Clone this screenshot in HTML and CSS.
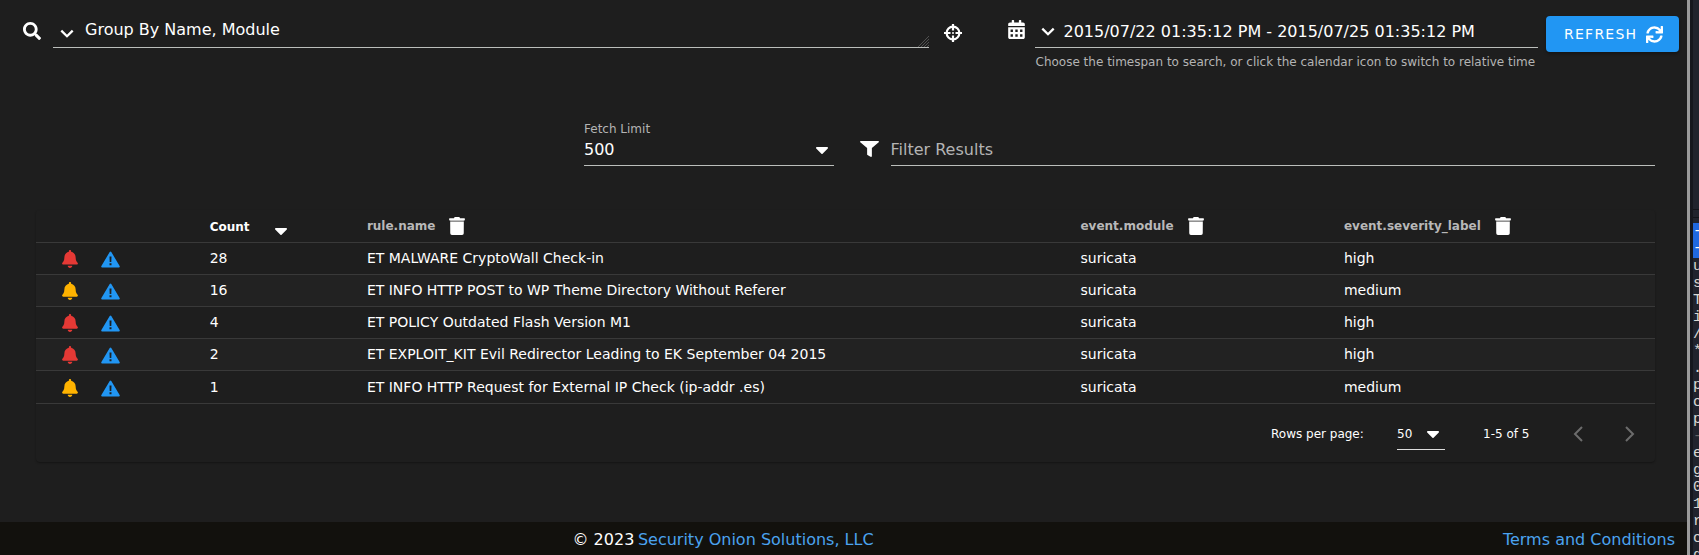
FILE: index.html
```html
<!DOCTYPE html>
<html lang="en">
<head>
<meta charset="utf-8">
<title>Alerts</title>
<link rel="stylesheet" href="styles.css">
</head>
<body>
<svg class="defs" aria-hidden="true">
  <symbol id="search" viewBox="0 0 512 512"><path d="M505 442.7L405.3 343c-4.5-4.5-10.6-7-17-7H372c27.6-35.3 44-79.7 44-128C416 93.1 322.9 0 208 0S0 93.1 0 208s93.1 208 208 208c48.3 0 92.7-16.4 128-44v16.3c0 6.400 2.500 12.500 7 17l99.700 99.700c9.400 9.400 24.600 9.400 33.900 0l28.300-28.300c9.400-9.400 9.400-24.600.1-34zM208 336c-70.700 0-128-57.200-128-128 0-70.700 57.200-128 128-128 70.700 0 128 57.200 128 128 0 70.700-57.200 128-128 128z"/></symbol>
  <symbol id="chevron" viewBox="0 0 14 9"><path d="M1.300 1.600L7 7.200l5.700-5.600" fill="none" stroke="currentColor" stroke-width="2.300"/></symbol>
  <symbol id="crosshair" viewBox="0 0 18 18"><g fill="none" stroke="currentColor" stroke-width="2.200"><circle cx="9" cy="9" r="6.400"/><path d="M9 0v6.500M9 11.500V18M0 9h6.500M11.500 9H18"/></g><circle cx="9" cy="9" r="1"/></symbol>
  <symbol id="calendar" viewBox="0 0 448 512"><path fill-rule="evenodd" d="M0 464c0 26.500 21.500 48 48 48h352c26.500 0 48-21.500 48-48V192H0zM64 256h64v64H64zM192 256h64v64h-64zM320 256h64v64h-64zM64 384h64v64H64zM192 384h64v64h-64zM320 384h64v64h-64zM400 64h-48V16c0-8.800-7.200-16-16-16h-32c-8.800 0-16 7.200-16 16v48H160V16c0-8.800-7.200-16-16-16h-32c-8.800 0-16 7.200-16 16v48H48C21.500 64 0 85.500 0 112v48h448v-48c0-26.500-21.500-48-48-48z"/></symbol>
  <symbol id="sync" viewBox="0 0 512 512"><path d="M440.650 12.570l4 82.770A247.160 247.160 0 0 0 255.830 8C134.730 8 33.910 94.920 12.290 209.820A12 12 0 0 0 24.090 224h49.050a12 12 0 0 0 11.670-9.260 175.910 175.910 0 0 1 317-56.940l-101.460-4.860a12 12 0 0 0-12.570 12v47.410a12 12 0 0 0 12 12H500a12 12 0 0 0 12-12V12a12 12 0 0 0-12-12h-47.370a12 12 0 0 0-11.980 12.570zM255.830 432a175.610 175.610 0 0 1-146-77.800l101.800 4.870a12 12 0 0 0 12.570-12v-47.400a12 12 0 0 0-12-12H12a12 12 0 0 0-12 12V500a12 12 0 0 0 12 12h47.350a12 12 0 0 0 12-12.600l-4.150-82.570A247.170 247.170 0 0 0 255.830 504c121.110 0 221.930-86.920 243.550-201.820a12 12 0 0 0-11.800-14.180h-49.050a12 12 0 0 0-11.670 9.260A175.860 175.860 0 0 1 255.830 432z"/></symbol>
  <symbol id="caret" viewBox="12 190 296 172"><path d="M31.300 192h257.300c17.800 0 26.700 21.500 14.100 34.100L174.100 354.800c-7.800 7.800-20.500 7.800-28.300 0L17.200 226.100C4.600 213.500 13.500 192 31.300 192z"/></symbol>
  <symbol id="filter" viewBox="0 0 512 512" preserveAspectRatio="none"><path d="M487.976 0H24.028C2.710 0-8.047 25.866 7.058 40.971L192 225.941V432c0 7.831 3.821 15.170 10.237 19.662l80 55.980C298.020 518.690 320 507.493 320 487.980V225.941l184.947-184.970C520.021 25.896 509.338 0 487.976 0z"/></symbol>
  <symbol id="trash" viewBox="0 0 448 512"><path opacity=".5" d="M30 90h388v44H30z"/><path d="M30 134l2 330a48 48 0 0 0 48 48h288a48 48 0 0 0 48-48l2-330zM432 32H312l-9.400-18.700A24 24 0 0 0 281.100 0H166.800a23.720 23.720 0 0 0-21.400 13.300L136 32H16A16 16 0 0 0 0 48v32a16 16 0 0 0 16 16h416a16 16 0 0 0 16-16V48a16 16 0 0 0-16-16z"/></symbol>
  <symbol id="bell" viewBox="0 0 448 512"><path d="M224 512c35.320 0 63.970-28.650 63.970-64H160.030c0 35.350 28.650 64 63.970 64zm215.390-149.710c-19.320-20.760-55.470-51.990-55.470-154.290 0-77.700-54.480-139.900-127.940-155.160V32c0-17.670-14.320-32-31.980-32s-31.980 14.330-31.980 32v20.840C118.560 68.100 64.080 130.300 64.080 208c0 102.300-36.150 133.530-55.470 154.290-6 6.450-8.660 14.160-8.610 21.710.11 16.400 12.980 32 32.100 32h383.800c19.120 0 32-15.600 32.100-32 .05-7.550-2.610-15.270-8.610-21.710z"/></symbol>
  <symbol id="warn" viewBox="0 0 19 17"><path fill-rule="evenodd" d="M8.700 1q.8-1.200 1.600 0l8.300 14q.7 1.500-.8 1.500H1.200q-1.500 0-.8-1.500zM8.500 5.500l.2 5.500h1.600l.2-5.500zM8.500 12.300v2h2v-2z"/></symbol>
  <symbol id="grip" viewBox="0 0 11 11"><path d="M0 11L11 0M3 11l8-8M6 11l5-5M9 11l2-2" stroke="#666" stroke-width=".7"/></symbol>
  <symbol id="prev" viewBox="0 0 10 16"><path d="M9 1L2 8l7 7" fill="none" stroke="currentColor" stroke-width="2"/></symbol>
  <symbol id="next" viewBox="0 0 10 16"><path d="M1 1l7 7-7 7" fill="none" stroke="currentColor" stroke-width="2"/></symbol>
</svg>
<div class="screen">
  <div class="app">
    <main>
      <div class="toolbar">
        <svg class="i-search"><use href="#search"/></svg>
        <div class="query"><svg class="chev"><use href="#chevron"/></svg><span class="query-text">Group By Name, Module</span><svg class="grip"><use href="#grip"/></svg></div>
        <svg class="i-cross"><use href="#crosshair"/></svg>
        <svg class="i-cal"><use href="#calendar"/></svg>
        <div class="range">
          <div class="range-input"><svg class="chev"><use href="#chevron"/></svg><span>2015/07/22 01:35:12 PM - 2015/07/25 01:35:12 PM</span></div>
          <div class="hint">Choose the timespan to search, or click the calendar icon to switch to relative time</div>
        </div>
        <button class="refresh"><span>REFRESH</span><svg><use href="#sync"/></svg></button>
      </div>
      <div class="filters">
        <div class="limit">
          <label>Fetch Limit</label>
          <div class="select"><span>500</span><svg class="caret"><use href="#caret"/></svg></div>
        </div>
        <svg class="i-filter"><use href="#filter"/></svg>
        <div class="filter-input">Filter Results</div>
      </div>
      <section class="card">
        <div class="row head">
          <span></span>
          <span class="sorted">Count<svg class="caret"><use href="#caret"/></svg></span>
          <span>rule.name<svg class="i-trash"><use href="#trash"/></svg></span>
          <span>event.module<svg class="i-trash"><use href="#trash"/></svg></span>
          <span>event.severity_label<svg class="i-trash"><use href="#trash"/></svg></span>
        </div>
        <div class="row"><span class="acts"><svg class="bell high"><use href="#bell"/></svg><svg class="warn"><use href="#warn"/></svg></span><span>28</span><span>ET MALWARE CryptoWall Check-in</span><span>suricata</span><span>high</span></div>
        <div class="row alt"><span class="acts"><svg class="bell medium"><use href="#bell"/></svg><svg class="warn"><use href="#warn"/></svg></span><span>16</span><span>ET INFO HTTP POST to WP Theme Directory Without Referer</span><span>suricata</span><span>medium</span></div>
        <div class="row"><span class="acts"><svg class="bell high"><use href="#bell"/></svg><svg class="warn"><use href="#warn"/></svg></span><span>4</span><span>ET POLICY Outdated Flash Version M1</span><span>suricata</span><span>high</span></div>
        <div class="row alt"><span class="acts"><svg class="bell high"><use href="#bell"/></svg><svg class="warn"><use href="#warn"/></svg></span><span>2</span><span>ET EXPLOIT_KIT Evil Redirector Leading to EK September 04 2015</span><span>suricata</span><span>high</span></div>
        <div class="row last"><span class="acts"><svg class="bell medium"><use href="#bell"/></svg><svg class="warn"><use href="#warn"/></svg></span><span>1</span><span>ET INFO HTTP Request for External IP Check (ip-addr .es)</span><span>suricata</span><span>medium</span></div>
        <div class="pager">
          <span class="rpp">Rows per page:</span>
          <span class="size">50<svg class="caret"><use href="#caret"/></svg></span>
          <span class="count">1-5 of 5</span>
          <svg class="arrow"><use href="#prev"/></svg>
          <svg class="arrow"><use href="#next"/></svg>
        </div>
      </section>
    </main>
    <footer><span>© 2023 <a class="company">Security Onion Solutions, LLC</a></span><a>Terms and Conditions</a></footer>
  </div>
  <div class="scrollbar"></div>
  <aside class="terminal">
    <div class="term-top"></div>
    <pre class="selected">-
-</pre>
    <pre>u
s
T
i
/
*
.
p
c
p
<i>-</i>
e
g
0
1
r
c
g</pre>
  </aside>
</div>
</body>
</html>
```
FILE: styles.css
```css
* { box-sizing: border-box; }
body { margin: 0; background: #1e1e1e; color: #fff; font: 16px/20px "DejaVu Sans", sans-serif; overflow: hidden; }
svg { display: block; flex: none; fill: currentColor; }
.defs { position: absolute; width: 0; height: 0; }
.screen { display: flex; width: 1699px; height: 555px; overflow: hidden; }
.app { width: 1687px; display: flex; flex-direction: column; }
main { flex: 1; }

.toolbar { display: flex; align-items: flex-start; height: 126px; padding-left: 23px; white-space: nowrap; }
.i-search { width: 18px; height: 18px; margin: 22px 12px 0 0; }
.query { display: flex; width: 876px; height: 48px; border-bottom: 1px solid #bbbebb; padding: 20px 0 0 7px; }
.query .chev { margin-top: 9px; }
.query-text { flex: 1; margin-left: 11px; }
.chev { width: 14px; height: 9px; }
.grip { width: 11px; height: 11px; margin-top: 16px; }
.i-cross { width: 18px; height: 18px; margin: 24px 0 0 15px; }
.i-cal { width: 17px; height: 19px; margin: 20px 10px 0 46px; }
.range { width: 503px; }
.range-input { display: flex; height: 48px; border-bottom: 1px solid #bbbebb; padding: 22px 0 0 6px; }
.range-input .chev { margin: 5px 8.5px 0 0; }
.hint { font-size: 12px; line-height: 14px; color: #b4b4b4; margin: 7px 0 0 .5px; }
.refresh { display: flex; align-items: center; width: 133px; height: 36px; margin: 16px 0 0 8px; padding: 0 0 0 18px; border: 0; border-radius: 4px; background: #2196f3; color: #fff; font: 14px/16px "DejaVu Sans", sans-serif; letter-spacing: 1.25px; box-shadow: 0 2px 3px rgba(0,0,0,.3); }
.refresh span { width: 82px; text-align: left; }
.refresh svg { width: 17px; height: 17px; margin-top: 1px; }

.filters { display: flex; padding-left: 584px; height: 84px; }
.limit { width: 250px; height: 40px; border-bottom: 1px solid #bbbebb; }
.limit label { display: block; font-size: 12px; line-height: 14px; color: #b4b4b4; margin-top: -4px; }
.select { display: flex; justify-content: space-between; align-items: center; padding: 4px 6px 0 0; }
.caret { width: 12px; height: 7px; }
.i-filter { width: 19px; height: 16px; margin: 15px 11.5px 0 26px; }
.filter-input { width: 764px; height: 40px; border-bottom: 1px solid #bbbebb; padding-top: 14px; color: #b4b4b4; }

.card { width: 1619px; height: 252px; margin-left: 36px; border-radius: 4px; box-shadow: 0 1px 2px rgba(0,0,0,.35); font-size: 14px; }
.row { display: grid; grid-template-columns: 173.7px 157.2px 713.6px 263.5px 1fr; height: 32px; border-bottom: 1px solid #393939; align-items: center; white-space: nowrap; }
.row > span:not(.acts) { padding-bottom: 2px; }
.row.alt { background: #222; }
.row.last { height: 33px; padding-top: 1px; }
.head { height: 33px; font-size: 12px; font-weight: bold; color: #b8b8b8; }
.row.head > span { display: flex; align-items: center; padding-bottom: 0; }
.row.head > .sorted { color: #fff; padding-top: 1px; }
.sorted .caret { margin: 9px 0 0 25px; }
.i-trash { width: 16px; height: 18px; margin: 0 0 0 14px; color: #fff; }
.acts { display: flex; align-items: center; padding-left: 26px; }
.bell { width: 16px; height: 18px; margin: 1px 23px 0 0; }
.high { color: #e53935; }
.medium { color: #ffb300; }
.warn { width: 19px; height: 17px; margin-top: 1px; color: #2196f3; }

.pager { display: flex; align-items: center; height: 59px; padding-left: 1235px; font-size: 12px; white-space: nowrap; }
.pager > * { flex: none; }
.rpp { width: 126px; }
.size { display: flex; align-items: center; gap: 15px; width: 48px; height: 32px; padding-top: 1px; margin: 1px 38px 0 0; border-bottom: 1px solid #ddd; }
.count { width: 90px; }
.arrow { width: 10px; height: 16px; margin-right: 42px; color: #6c6c6c; }

footer { display: flex; justify-content: space-between; height: 33px; padding: 8px 12px 0 572.5px; background: #12110d; }
footer a { color: #4ba3ef; }
.company { margin-left: -1.5px; }

.scrollbar { width: 3px; background: #9b9b9b; }
.terminal { width: 9px; overflow: hidden; background: #20232d; border-left: 3px solid #15171e; }
.term-top { height: 223px; background: linear-gradient(#12141a, #12141a) 0 209px / 100% 1px no-repeat, linear-gradient(#12141a, #12141a) 0 217px / 100% 1px no-repeat; }
.terminal pre { margin: 0; color: #d8d8d4; font: 15px/17px "Liberation Mono", monospace; }
.terminal .selected { background: #2068e0; height: 35px; color: #fff; }
.terminal i { color: #666; font-style: normal; }
```
